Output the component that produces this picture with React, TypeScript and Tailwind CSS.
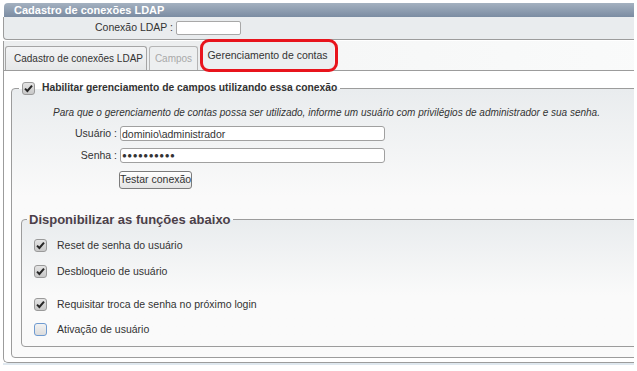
import React from "react";

type CheckProps = {
  checked: boolean;
  focused?: boolean;
};

function Check({ checked, focused }: CheckProps) {
  return (
    <span
      className={`flex h-[13px] w-[13px] shrink-0 items-center justify-center rounded-[3px] border ${
        focused
          ? "border-[#6f9bd1] bg-gradient-to-b from-[#f2f2f2] to-[#dcdcdc]"
          : "border-[#9a9a9a] bg-gradient-to-b from-[#e4e4e4] to-[#c8c8c8]"
      }`}
    >
      {checked && (
        <svg width="9" height="9" viewBox="0 0 9 9">
          <path
            d="M1 4.6 L3.4 7 L8 1.6"
            fill="none"
            stroke="#262626"
            strokeWidth="2"
          />
        </svg>
      )}
    </span>
  );
}

const funcoes = [
  { label: "Reset de senha do usuário", checked: true, mt: "mt-[10px]" },
  { label: "Desbloqueio de usuário", checked: true, mt: "mt-[10px]" },
  { label: "Requisitar troca de senha no próximo login", checked: true, mt: "mt-[17px]" },
  { label: "Ativação de usuário", checked: false, focused: true, mt: "mt-[9px]" },
];

export default function App() {
  return (
    <div className="relative h-[371px] w-[637px] overflow-hidden bg-white font-['Liberation_Sans',Arial,sans-serif] text-[10.5px] text-[#333]">
      <div className="ml-[3px] mt-[3px] w-[631px] overflow-hidden">
        <div className="w-[680px]">
          <div className="ml-[1px] h-[14px] rounded-tl-[4px] bg-gradient-to-b from-[#a4b1c0] to-[#7b8ca2] pl-[10px] text-[11px] font-bold leading-[14px] text-white">
            Cadastro de conexões LDAP
          </div>

          <div className="flex h-[23px] items-center rounded-bl-[4px] border-b border-l border-[#9c9c9c] bg-[#e9ecee] pl-[91px]">
            <span>Conexão LDAP :</span>
            <span className="ml-[3px] h-[14px] w-[65px] rounded-[2px] border border-[#a8a8a8] bg-white" />
          </div>

          <div className="mt-[1px] rounded-bl-[5px] border-b border-l border-[#9c9c9c] pb-[4px]">
            <div className="flex h-[30px] border-b border-[#9c9c9c] bg-[#eceeef] text-[10px]">
              <div className="ml-[1px] mt-[5px] flex h-[24px] w-[142px] items-center whitespace-nowrap rounded-t-[3px] border border-b-0 border-[#a5a5a5] bg-gradient-to-b from-[#f3f4f5] to-[#e6e8e9] pl-[8px]">
                Cadastro de conexões LDAP
              </div>
              <div className="ml-[2px] mt-[5px] flex h-[24px] w-[49px] items-center justify-center rounded-t-[3px] border border-b-0 border-[#b5b5b5] bg-[#edeff0] text-[#a9a9a9]">
                Campos
              </div>
              <div className="ml-[3px] flex w-[133px] items-center justify-center whitespace-nowrap bg-[#eceff0] text-[10.5px]">
                Gerenciamento de contas
              </div>
              <div className="flex-1 bg-gradient-to-r from-[#f6f7f7] to-[#fafbfb]" />
            </div>

            <fieldset className="ml-[7px] mt-[10px] rounded-[4px] border border-[#9c9c9c] bg-gradient-to-b from-[#e9ecee] to-[#fafafa] to-40% pb-[10px]">
              <legend className="ml-[7px] flex items-center px-[3px]">
                <Check checked />
                <span className="ml-[7px] text-[10.3px] font-bold leading-[14px]">
                  Habilitar gerenciamento de campos utilizando essa conexão
                </span>
              </legend>

              <p className="mt-[11px] whitespace-nowrap pl-[41px] text-[10px] italic leading-[14px]">
                Para que o gerenciamento de contas possa ser utilizado, informe um usuário com privilégios de administrador e sua senha.
              </p>

              <div className="mt-[6px] flex items-center">
                <span className="w-[105px] text-right">Usuário :</span>
                <span className="ml-[3px] flex h-[15px] w-[265px] items-center rounded-[3px] border border-[#a0a0a0] bg-white pl-[1px] leading-none">
                  dominio\administrador
                </span>
              </div>
              <div className="mt-[6px] flex items-center">
                <span className="w-[105px] text-right">Senha :</span>
                <span className="ml-[3px] flex h-[15px] w-[265px] items-center rounded-[3px] border border-[#a0a0a0] bg-white pl-[1px] text-[8px] leading-none tracking-[0.5px]">
                  ●●●●●●●●●●
                </span>
              </div>
              <button className="ml-[107px] mt-[7px] h-[18px] w-[73px] whitespace-nowrap rounded-[3px] border border-[#7c7c7c] bg-gradient-to-b from-white to-[#e4e4e4] text-[10.5px] leading-none text-[#333]">
                Testar conexão
              </button>

              <fieldset className="ml-[9px] mt-[23px] rounded-[4px] border border-[#9c9c9c] bg-gradient-to-b from-[#e9ecee] to-[#fafafa] to-60% pb-[8px]">
                <legend className="ml-[5px] px-[2px] text-[13px] font-bold leading-[16px] text-[#4b4049]">
                  Disponibilizar as funções abaixo
                </legend>
                {funcoes.map((f) => (
                  <div key={f.label} className={`flex h-[16px] items-center pl-[12px] ${f.mt}`}>
                    <Check checked={f.checked} focused={f.focused} />
                    <span className="ml-[10px]">{f.label}</span>
                  </div>
                ))}
              </fieldset>
            </fieldset>
          </div>
          <div className="h-[2px] bg-[#dfe8ef]" />
        </div>
      </div>

      <div className="absolute left-[200px] top-[39px] h-[33px] w-[138px] rounded-[9px] border-[3px] border-[#e8141c]" />
    </div>
  );
}
